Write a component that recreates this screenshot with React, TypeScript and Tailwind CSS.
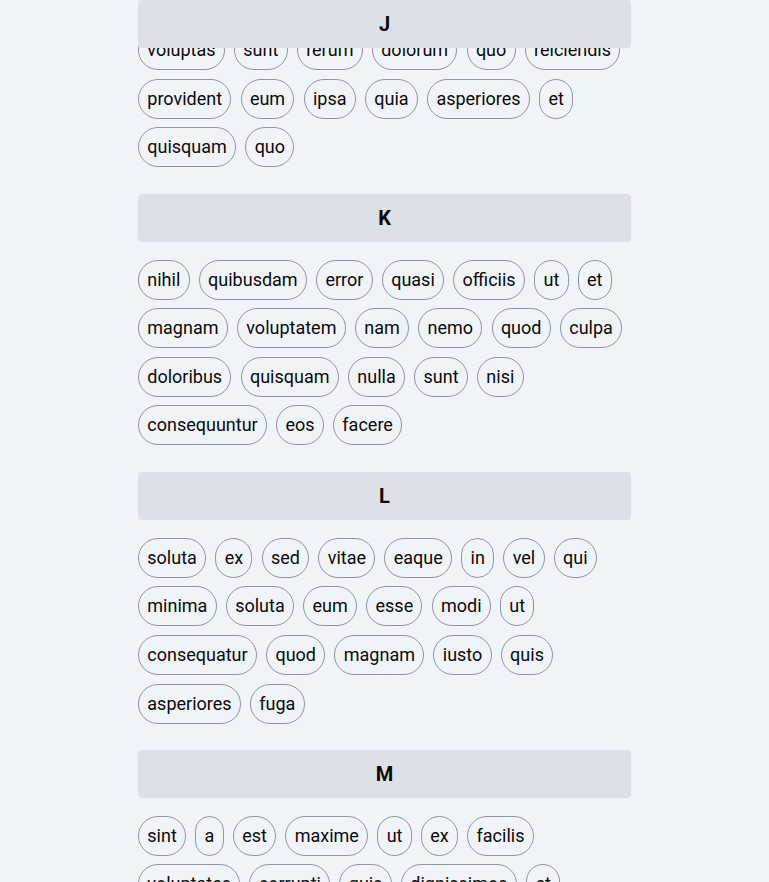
import React from 'react'

const sections = [
    {
        letter: 'J',
        words: ['voluptas', 'sunt', 'rerum', 'dolorum', 'quo', 'reiciendis', 'provident', 'eum', 'ipsa', 'quia', 'asperiores', 'et', 'quisquam', 'quo'],
    },
    {
        letter: 'K',
        words: ['nihil', 'quibusdam', 'error', 'quasi', 'officiis', 'ut', 'et', 'magnam', 'voluptatem', 'nam', 'nemo', 'quod', 'culpa', 'doloribus', 'quisquam', 'nulla', 'sunt', 'nisi', 'consequuntur', 'eos', 'facere'],
    },
    {
        letter: 'L',
        words: ['soluta', 'ex', 'sed', 'vitae', 'eaque', 'in', 'vel', 'qui', 'minima', 'soluta', 'eum', 'esse', 'modi', 'ut', 'consequatur', 'quod', 'magnam', 'iusto', 'quis', 'asperiores', 'fuga'],
    },
    {
        letter: 'M',
        words: ['sint', 'a', 'est', 'maxime', 'ut', 'ex', 'facilis', 'voluptates', 'corrupti', 'quis', 'dignissimos', 'et', 'nobis', 'odit'],
    },
]

export default function App() {
    return (
        <div className="min-h-screen bg-[#f0f4f8] font-['Roboto',sans-serif] text-[#0a0a0a]">
            <div className="mx-auto flex w-[493px] flex-col gap-[26.2px] overflow-hidden">
                {sections.map((section, i) => (
                    <section key={section.letter}>
                        {/* sticky letter bar */}
                        <div className="sticky top-0 z-10 flex h-12 items-center justify-center rounded bg-[#dbe1e7] text-xl font-bold">
                            {section.letter}
                        </div>
                        <div className={i === 0 ? 'relative -mt-[18px] flex flex-wrap gap-x-[9.2px] gap-y-[8.67px]' : 'mt-[18px] flex flex-wrap gap-x-[9.2px] gap-y-[8.67px]'}>
                            {section.words.map((word, j) => (
                                <span
                                    key={j}
                                    className="rounded-full border border-[#8d959f] px-[8.3px] py-[5px] text-lg leading-7"
                                >
                                    {word}
                                </span>
                            ))}
                        </div>
                    </section>
                ))}
            </div>
        </div>
    )
}
